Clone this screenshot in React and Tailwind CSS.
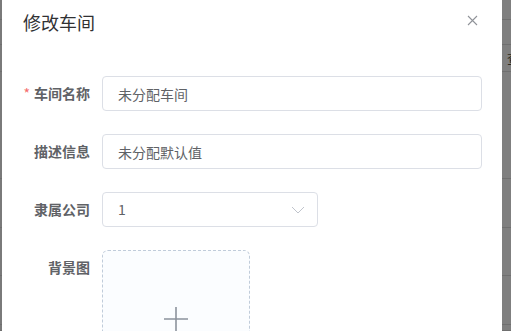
import { useState } from "react";

const FONT = { fontFamily: '"Noto Sans CJK SC", "Noto Sans", sans-serif' };

// background table rows peeking out from behind the overlay
const BG_ROWS = [20, 25, 27, 107, 49, 48, 49, 6];

function BgStrip({ glyph }) {
  return (
    <div className="flex flex-col h-full overflow-hidden">
      {BG_ROWS.map((h, i) => (
        <div key={i} className="shrink-0 border-b border-[#6f6f6f] relative" style={{ height: h }}>
          {glyph && i === 2 && (
            <span className="absolute left-[5px] top-[5px] text-[13px] leading-4 text-[#2a2a20]">查</span>
          )}
        </div>
      ))}
    </div>
  );
}

function Field({ label, required, children, top = false }) {
  return (
    <div className="flex mb-[23px]">
      <label
        className={`w-[80px] shrink-0 pr-3 text-right text-[14px] font-bold text-[#606266] leading-[35px] ${top ? "" : ""}`}
      >
        {required && <span className="text-[#f56c6c] mr-1 font-normal">*</span>}
        {label}
      </label>
      {children}
    </div>
  );
}

const inp =
  "h-[35px] border border-[#dcdfe6] rounded px-[15px] text-[14px] text-[#606266] bg-white outline-none";

export default function App() {
  const [name, setName] = useState("未分配车间");
  const [desc, setDesc] = useState("未分配默认值");

  return (
    <div className="w-[511px] h-[331px] bg-[#7f7f7f] flex overflow-hidden" style={FONT}>
      <div className="w-[2px] shrink-0 bg-[#7a7a7a]">
        <BgStrip />
      </div>

      <div className="w-[500px] shrink-0 bg-white relative">
        <div className="pt-[10px] px-[21px] h-[76px]">
          <h3 className="text-[18px] leading-6 text-[#303133]">修改车间</h3>
        </div>
        <button className="absolute right-[24px] top-[15px] text-[#909399]">
          <svg width="11" height="11" viewBox="0 0 11 11">
            <path d="M1 1 L10 10 M10 1 L1 10" stroke="currentColor" strokeWidth="1.1" fill="none" />
          </svg>
        </button>

        <form className="px-5">
          <Field label="车间名称" required>
            <input className={`${inp} flex-1 min-w-0`} value={name} onChange={(e) => setName(e.target.value)} />
          </Field>
          <Field label="描述信息">
            <input className={`${inp} flex-1 min-w-0`} value={desc} onChange={(e) => setDesc(e.target.value)} />
          </Field>
          <Field label="隶属公司">
            <div className={`${inp} w-[216px] flex items-center justify-between pr-[12px]`}>
              <span>1</span>
              <svg width="14" height="8" viewBox="0 0 14 8" className="text-[#c0c4cc]">
                <path d="M1 1 L7 7 L13 1" stroke="currentColor" strokeWidth="1" fill="none" />
              </svg>
            </div>
          </Field>
          <Field label="背景图">
            <div className="w-[148px] h-[148px] border border-dashed border-[#c0ccda] rounded-md bg-[#fbfdff] flex items-center justify-center">
              <svg width="24" height="24" viewBox="0 0 24 24" className="mb-[11px] text-[#8c939d]">
                <path d="M12 0 V24 M0 12 H24" stroke="currentColor" strokeWidth="1.6" fill="none" />
              </svg>
            </div>
          </Field>
        </form>
      </div>

      <div className="flex-1 bg-[#7f7f7f]">
        <BgStrip glyph />
      </div>
    </div>
  );
}
